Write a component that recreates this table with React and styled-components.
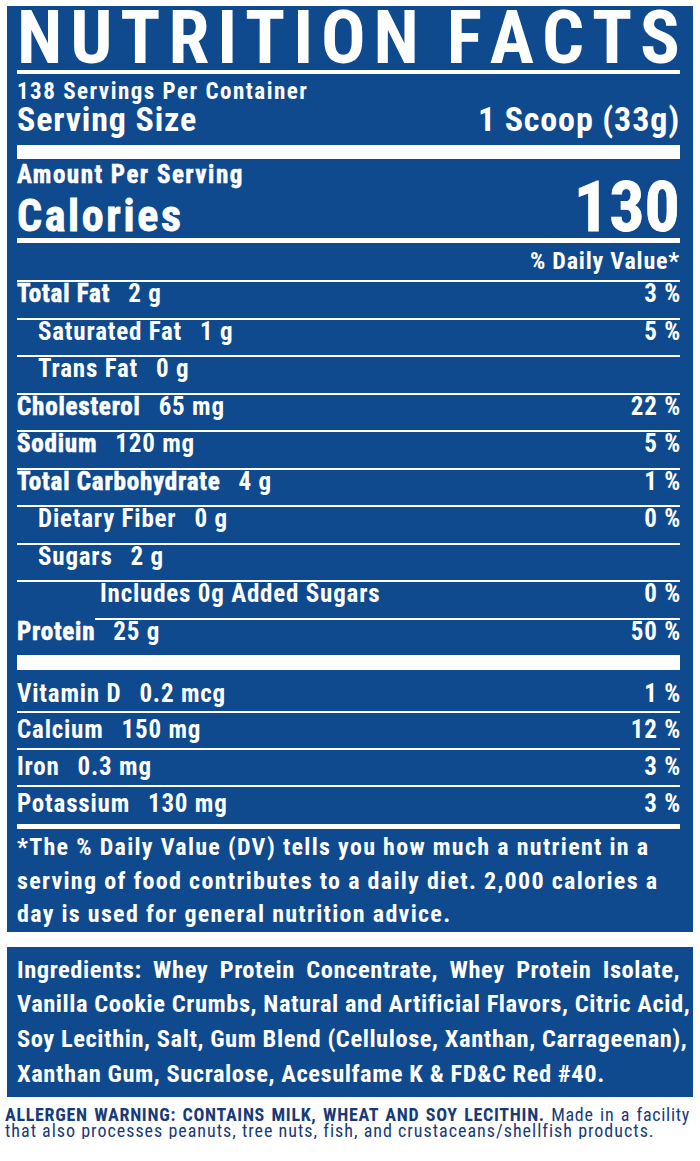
import styled, { createGlobalStyle } from "styled-components";

const BLUE = "#0f4a8f";

const GlobalStyle = createGlobalStyle`
  body {
    margin: 0;
    background: #ffffff;
    font-family: "Roboto Condensed", "DejaVu Sans Condensed", Roboto, sans-serif;
  }
`;

const nutrients = [
  { name: "Total Fat", amount: "2 g", dv: "3 %", main: true },
  { name: "Saturated Fat", amount: "1 g", dv: "5 %", level: 1 },
  { name: "Trans Fat", amount: "0 g", dv: "", level: 1 },
  { name: "Cholesterol", amount: "65 mg", dv: "22 %", main: true },
  { name: "Sodium", amount: "120 mg", dv: "5 %", main: true },
  { name: "Total Carbohydrate", amount: "4 g", dv: "1 %", main: true },
  { name: "Dietary Fiber", amount: "0 g", dv: "0 %", level: 1 },
  { name: "Sugars", amount: "2 g", dv: "", level: 1 },
];

const vitamins = [
  { name: "Vitamin D", amount: "0.2 mcg", dv: "1 %" },
  { name: "Calcium", amount: "150 mg", dv: "12 %" },
  { name: "Iron", amount: "0.3 mg", dv: "3 %" },
  { name: "Potassium", amount: "130 mg", dv: "3 %" },
];

const footnoteLines = [
  "*The % Daily Value (DV) tells you how much a nutrient in a",
  "serving of food contributes to a daily diet. 2,000 calories a",
  "day is used for general nutrition advice.",
];

const ingredientLines = [
  "Ingredients: Whey Protein Concentrate, Whey Protein Isolate,",
  "Vanilla Cookie Crumbs, Natural and Artificial Flavors, Citric Acid,",
  "Soy Lecithin, Salt, Gum Blend (Cellulose, Xanthan, Carrageenan),",
  "Xanthan Gum, Sucralose, Acesulfame K & FD&C Red #40.",
];

const title = "NUTRITION FACTS".split("");

export default function App() {
  return (
    <>
      <GlobalStyle />
      <Label>
        <Title>
          {title.map((ch, i) =>
            ch === " " ? <TitleSpace key={i} /> : <span key={i}>{ch}</span>
          )}
        </Title>
        <Rule $size={4} />

        <Servings>138 Servings Per Container</Servings>
        <ServingSize>
          <span>Serving Size</span>
          <span>1 Scoop (33g)</span>
        </ServingSize>
        <Rule $size={14} $top={11} />

        <AmountPer>Amount Per Serving</AmountPer>
        <CaloriesRow>
          <CaloriesLabel>Calories</CaloriesLabel>
          <CaloriesValue>130</CaloriesValue>
        </CaloriesRow>
        <Rule $size={5} $top={2} />

        <DailyHeader>% Daily Value*</DailyHeader>

        {nutrients.map((n) => (
          <Row key={n.name} $indent={n.level ? 21 : 0}>
            <span>
              <Name $main={n.main}>{n.name}</Name>
              <Amount>{n.amount}</Amount>
            </span>
            <Percent>{n.dv}</Percent>
          </Row>
        ))}
        <Row $shift={78} $indent={5}>
          <Name>Includes 0g Added Sugars</Name>
          <Percent>0 %</Percent>
        </Row>
        <Row $last>
          <span>
            <Name $main>Protein</Name>
            <Amount>25 g</Amount>
          </span>
          <Percent>50 %</Percent>
        </Row>
        <Rule $size={15} />

        {vitamins.map((v, i) => (
          <VitaminRow key={v.name} $first={i === 0} $last={i === vitamins.length - 1}>
            <span>
              <Name>{v.name}</Name>
              <Amount>{v.amount}</Amount>
            </span>
            <Percent>{v.dv}</Percent>
          </VitaminRow>
        ))}
        <Rule $size={5} />

        <Footnote>
          {footnoteLines.map((line) => (
            <div key={line}>{line}</div>
          ))}
        </Footnote>
      </Label>

      <Ingredients>
        {ingredientLines.map((line, i) => (
          <JustifiedLine key={i} $last={i === ingredientLines.length - 1}>
            {line}
          </JustifiedLine>
        ))}
      </Ingredients>

      <Allergen>
        <JustifiedLine $tight>
          <strong>ALLERGEN WARNING: CONTAINS MILK, WHEAT AND SOY LECITHIN.</strong>{" "}
          Made in a facility
        </JustifiedLine>
        <JustifiedLine $last>
          that also processes peanuts, tree nuts, fish, and crustaceans/shellfish products.
        </JustifiedLine>
      </Allergen>
    </>
  );
}

const Label = styled.div`
  margin: 6px 7px 0;
  padding: 0 13px 0 10px;
  background: ${BLUE};
  color: #ffffff;
  font-weight: 700;
  letter-spacing: 0.05em;
`;

const Title = styled.div`
  display: flex;
  justify-content: space-between;
  height: 64px;
  font-size: 74px;
  line-height: 64px;
  letter-spacing: 0;
`;

const TitleSpace = styled.span`
  width: 12px;
`;

const Rule = styled.div`
  height: ${({ $size }) => $size}px;
  margin-top: ${({ $top }) => $top || 0}px;
  background: #ffffff;
`;

const Servings = styled.div`
  padding-top: 6px;
  font-size: 23px;
  line-height: 24px;
  letter-spacing: 0.065em;
`;

const ServingSize = styled.div`
  display: flex;
  justify-content: space-between;
  font-size: 34px;
  line-height: 30px;
  letter-spacing: 0.025em;
`;

const AmountPer = styled.div`
  font-size: 25px;
  line-height: 31px;
  letter-spacing: 0.06em;
  -webkit-text-stroke: 0.5px #ffffff;
`;

const CaloriesRow = styled.div`
  display: flex;
  justify-content: space-between;
  align-items: baseline;
  margin-top: -12px;
  height: 58px;
  line-height: 58px;
  -webkit-text-stroke: 0.8px #ffffff;
`;

const CaloriesLabel = styled.span`
  font-size: 44px;
  letter-spacing: 0.06em;
`;

const CaloriesValue = styled.span`
  font-size: 70px;
  letter-spacing: 0;
`;

const DailyHeader = styled.div`
  text-align: right;
  font-size: 24px;
  line-height: 37px;
  border-bottom: 2px solid #ffffff;
`;

const Row = styled.div`
  display: flex;
  justify-content: space-between;
  height: 35.5px;
  margin-left: ${({ $shift }) => $shift || 0}px;
  padding-left: ${({ $indent }) => $indent || 0}px;
  font-size: 25px;
  line-height: 24px;
  border-bottom: ${({ $last }) => ($last ? "none" : "2px solid #ffffff")};
`;

const VitaminRow = styled.div`
  display: flex;
  justify-content: space-between;
  box-sizing: border-box;
  height: ${({ $first }) => ($first ? 43 : 37)}px;
  padding-top: ${({ $first }) => ($first ? 12 : 5)}px;
  font-size: 25px;
  line-height: 24px;
  border-bottom: ${({ $last }) => ($last ? "none" : "2px solid #ffffff")};
`;

const Name = styled.span`
  -webkit-text-stroke: ${({ $main }) => ($main ? "0.6px #ffffff" : "0")};
`;

const Amount = styled.span`
  margin-left: 18px;
`;

const Percent = styled.span`
  margin-right: -1px;
`;

const Footnote = styled.div`
  padding-top: 2px;
  font-size: 24px;
  line-height: 33.5px;
  letter-spacing: 1.3px;
  white-space: nowrap;
`;

const Ingredients = styled.div`
  margin: 15px 7px 0;
  padding: 6px 13px 6px 10px;
  background: ${BLUE};
  color: #ffffff;
  font-size: 24.5px;
  font-weight: 700;
  line-height: 34.7px;
  letter-spacing: 0.55px;
`;

const JustifiedLine = styled.div`
  white-space: nowrap;
  text-align: ${({ $last }) => ($last ? "left" : "justify")};
  text-align-last: ${({ $last }) => ($last ? "left" : "justify")};
  letter-spacing: ${({ $tight }) => ($tight ? "0.7px" : "inherit")};
`;

const Allergen = styled.div`
  margin-top: 10px;
  padding: 0 10px 0 5px;
  color: #173a78;
  font-size: 18px;
  line-height: 16px;
  letter-spacing: 1px;
  strong {
    font-weight: 700;
  }
`;
